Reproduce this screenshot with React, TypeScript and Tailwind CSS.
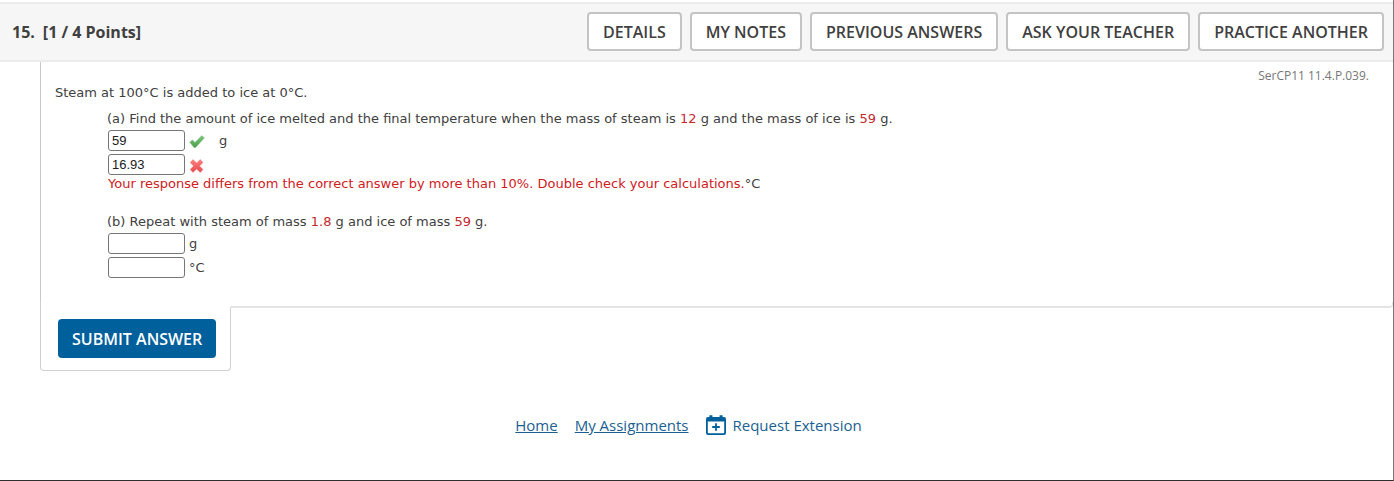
import type { ReactNode } from 'react';

const actions = ['Details', 'My Notes', 'Previous Answers', 'Ask Your Teacher', 'Practice Another'];

function Value({ children }: { children: ReactNode }) {
  return <span className="text-[#c5282c]">{children}</span>;
}

function AnswerBox({ label, value }: { label: string; value?: string }) {
  return (
    <input
      type="text"
      aria-label={label}
      defaultValue={value}
      className="h-[21px] w-[77px] rounded-[3px] border border-[#767676] bg-white px-[3px] font-['Liberation_Sans',sans-serif] text-[13px] text-[#202020]"
    />
  );
}

function CheckMark() {
  return (
    <svg width="16" height="16" viewBox="0 0 16 16" role="img" aria-label="Correct">
      <defs>
        <linearGradient id="check" x1="0" y1="0" x2="0" y2="1">
          <stop offset="0" stopColor="#7cc47c" />
          <stop offset="1" stopColor="#4a9f4c" />
        </linearGradient>
      </defs>
      <path d="M.8 9.2 3.4 7 6 9.4 12.7 2.8 15.4 4.8 6.6 14.6 5 14.6Z" fill="url(#check)" stroke="#6cb66c" strokeWidth="0.5" strokeLinejoin="round" />
    </svg>
  );
}

function CrossMark() {
  return (
    <svg width="15" height="16" viewBox="0 0 15 16" role="img" aria-label="Incorrect">
      <defs>
        <linearGradient id="cross" x1="0" y1="0" x2="0" y2="1">
          <stop offset="0" stopColor="#fa8080" />
          <stop offset="1" stopColor="#e9484c" />
        </linearGradient>
      </defs>
      <path d="M1.2 5.4 4 2.6 7.6 6 11.2 2.6 14 5.4 10.6 9 14 12.6 11.2 15.4 7.6 12 4 15.4 1.2 12.6 4.6 9Z" fill="url(#cross)" stroke="#f07678" strokeWidth="0.5" strokeLinejoin="round" />
    </svg>
  );
}

function CalendarPlus() {
  return (
    <svg width="20" height="20" viewBox="0 0 20 20" fill="none" aria-hidden="true">
      <path d="M2 2H3.4V.2H6.4V2H13.6V.2H16.6V2H18A2 2 0 0 1 20 4V18A2 2 0 0 1 18 20H2A2 2 0 0 1 0 18V4A2 2 0 0 1 2 2ZM1.8 6.4V17.4A.8.8 0 0 0 2.6 18.2H17.4A.8.8 0 0 0 18.2 17.4V6.4Z" fill="#00609c" fillRule="evenodd" />
      <path d="M10 8.2V15.8M6.2 12H13.8" stroke="#00609c" strokeWidth="1.8" />
    </svg>
  );
}

export default function App() {
  return (
    <div className="min-h-screen border-r border-b border-r-[#777777] border-b-[#2e2e2e] bg-white pt-[2px] font-['Open_Sans',sans-serif] text-[#404040]">
      <header className="flex items-center justify-between border-t-2 border-b-2 border-[#ebebeb] bg-[#f6f6f6] pt-2 pr-[9px] pb-[9px] pl-3">
        <h1 className="flex gap-2 text-base leading-5 font-bold">
          <span>15.</span>
          <span>[1 / 4 Points]</span>
        </h1>
        <div className="flex gap-2">
          {actions.map((action) => (
            <button
              key={action}
              type="button"
              className="h-[39px] rounded border-2 border-[#c4c4c4] bg-white px-3.5 text-base font-semibold whitespace-nowrap uppercase"
            >
              {action}
            </button>
          ))}
        </div>
      </header>

      <main className="ml-10">
        <div className="flex items-start justify-between border-l border-[#c8c8c8] pr-6 pb-6 pl-3.5 font-['DejaVu_Sans',sans-serif] text-[13px] leading-4">
          <div className="pt-[23px]">
            <p>Steam at 100°C is added to ice at 0°C.</p>

            <div className="mt-2.5 pl-13">
              <p>
                (a) Find the amount of ice melted and the final temperature when the mass of steam is <Value>12</Value> g and the mass of ice is <Value>59</Value> g.
              </p>
              <div className="mt-[3px] flex flex-col gap-[3px] pl-px">
                <div className="flex items-center gap-1">
                  <AnswerBox label="Mass of ice melted in grams, part a" value="59" />
                  <CheckMark />
                  <span className="ml-2.5">g</span>
                </div>
                <div className="flex items-center gap-1">
                  <AnswerBox label="Final temperature in degrees Celsius, part a" value="16.93" />
                  <CrossMark />
                </div>
              </div>
              <p className="mt-px pl-px">
                <span className="text-[#d0201c]">Your response differs from the correct answer by more than 10%. Double check your calculations.</span>°C
              </p>

              <p className="mt-[22px]">
                (b) Repeat with steam of mass <Value>1.8</Value> g and ice of mass <Value>59</Value> g.
              </p>
              <div className="mt-[3px] flex flex-col gap-[3px] pl-px">
                <div className="flex items-center gap-1">
                  <AnswerBox label="Mass of ice melted in grams, part b" />
                  <span>g</span>
                </div>
                <div className="flex items-center gap-1">
                  <AnswerBox label="Final temperature in degrees Celsius, part b" />
                  <span>°C</span>
                </div>
              </div>
            </div>
          </div>
          <span className="pt-1.5 font-['Open_Sans',sans-serif] text-xs text-[#777777]">SerCP11 11.4.P.039.</span>
        </div>

        <div className="flex items-start">
          <div className="rounded-b border-r border-b border-l border-[#d0d0d0] pt-[17px] pr-3.5 pb-3 pl-[17px]">
            <button type="button" className="h-[39px] rounded bg-[#00609c] px-3.5 text-base font-semibold whitespace-nowrap text-white uppercase">
              Submit Answer
            </button>
          </div>
          <div className="-ml-px h-1.5 flex-1 rounded-br border-r border-b-2 border-[#e4e4e4] bg-white" />
        </div>
      </main>

      <footer className="mt-11 flex items-center justify-center gap-[17px] pr-4 text-[15px] leading-5 text-[#1a6192]">
        <a href="#home" className="underline">Home</a>
        <a href="#assignments" className="underline">My Assignments</a>
        <a href="#extension" className="flex items-center gap-[7px]">
          <CalendarPlus />
          Request Extension
        </a>
      </footer>
    </div>
  );
}
